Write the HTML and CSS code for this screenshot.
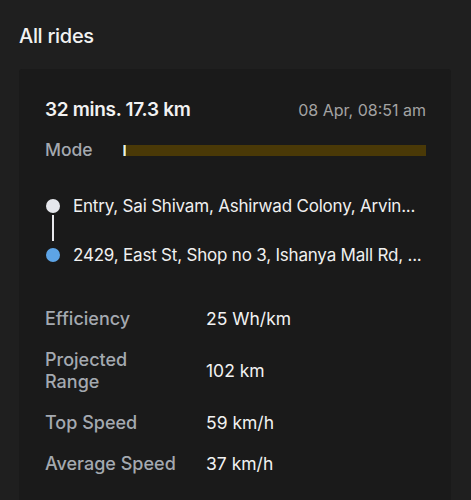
FILE: index.html
```html
<!DOCTYPE html>
<html>
<head>
	<title>All rides</title>
	<link rel="stylesheet" href="styles.css">
</head>
<body>
    <h2 class="page-title">All rides</h2>
    <div class="ride-card">
        <div class="ride-head">
            <span class="ride-summary">32 mins. 17.3 km</span>
            <span class="ride-date">08 Apr, 08:51 am</span>
        </div>

        <div class="mode-row">
            <span class="label">Mode</span>
            <div class="mode-bar">
                <span class="seg seg-blue"></span>
                <span class="seg seg-white"></span>
                <span class="seg seg-yellow"></span>
            </div>
        </div>

        <div class="route">
            <div class="stop">
                <span class="dot dot-start"></span>
                <span class="stop-name">Entry, Sai Shivam, Ashirwad Colony, Arvin...</span>
            </div>
            <div class="stop">
                <span class="dot dot-end"></span>
                <span class="stop-name">2429, East St, Shop no 3, Ishanya Mall Rd, ...</span>
            </div>
        </div>

        <div class="stats">
            <span class="label">Efficiency</span>
            <span class="value">25 Wh/km</span>
            <span class="label">Projected<br>Range</span>
            <span class="value">102 km</span>
            <span class="label">Top Speed</span>
            <span class="value">59 km/h</span>
            <span class="label">Average Speed</span>
            <span class="value">37 km/h</span>
        </div>
    </div>
</body>
</html>
```

FILE: styles.css
```css
body {
    margin: 0;
    background-color: #1f1f1f;
    color: #f2f2f2;
    font-family: Inter, "Noto Sans", sans-serif;
}

/* page heading */
.page-title {
    margin: 0;
    padding: 24px 19px 0;
    font-size: 20px;
    font-weight: 500;
    line-height: 24px;
    letter-spacing: -0.3px;
}

/* ride card */
.ride-card {
    margin: 21px 20px 0 19px;
    padding: 29px 25px 40px 26px;
    background-color: #1a1a1a;
    border-radius: 3px;
}

.ride-head {
    display: flex;
    justify-content: space-between;
    align-items: center;
    line-height: 24px;
}

.ride-summary {
    font-size: 19px;
    font-weight: 600;
    letter-spacing: -0.3px;
}

.ride-date {
    font-size: 16px;
    color: #a3a3a3;
}

.label {
    color: #a4a9b0;
    font-size: 18px;
    font-weight: 500;
}

/* mode bar */
.mode-row {
    display: flex;
    align-items: center;
    margin-top: 16px;
    line-height: 24px;
}

.mode-row .label {
    width: 78px;
    flex: none;
    font-size: 17.5px;
}

.mode-bar {
    flex: 1;
    display: flex;
    height: 11px;
    background-color: #4a3907;
}

.seg {
    width: 1px;
}

.seg-blue { background-color: #5a9fd8; }
.seg-white { background-color: #f4f0d8; }
.seg-yellow { background-color: #d8c060; }

/* route */
.route {
    margin-top: 32px;
    display: flex;
    flex-direction: column;
    gap: 25px;
    position: relative;
}

.route::before {
    content: "";
    position: absolute;
    left: 7px;
    top: 21px;
    height: 26px;
    width: 2px;
    background-color: #e8e8ec;
}

.stop {
    display: flex;
    align-items: center;
    gap: 13px;
    line-height: 24px;
}

.dot {
    flex: none;
    width: 14px;
    height: 14px;
    margin-left: 1px;
    border-radius: 50%;
}

.dot-start { background-color: #e5e7ec; }
.dot-end { background-color: #5da4e6; }

.stop-name {
    font-size: 17px;
    color: #f0f0f0;
    white-space: nowrap;
    letter-spacing: -0.2px;
}

/* stats */
.stats {
    margin-top: 41px;
    display: grid;
    grid-template-columns: 161px 1fr;
    row-gap: 19px;
    align-items: center;
    line-height: 22px;
}

.value {
    font-size: 17.5px;
    color: #f2f2f2;
}
```
